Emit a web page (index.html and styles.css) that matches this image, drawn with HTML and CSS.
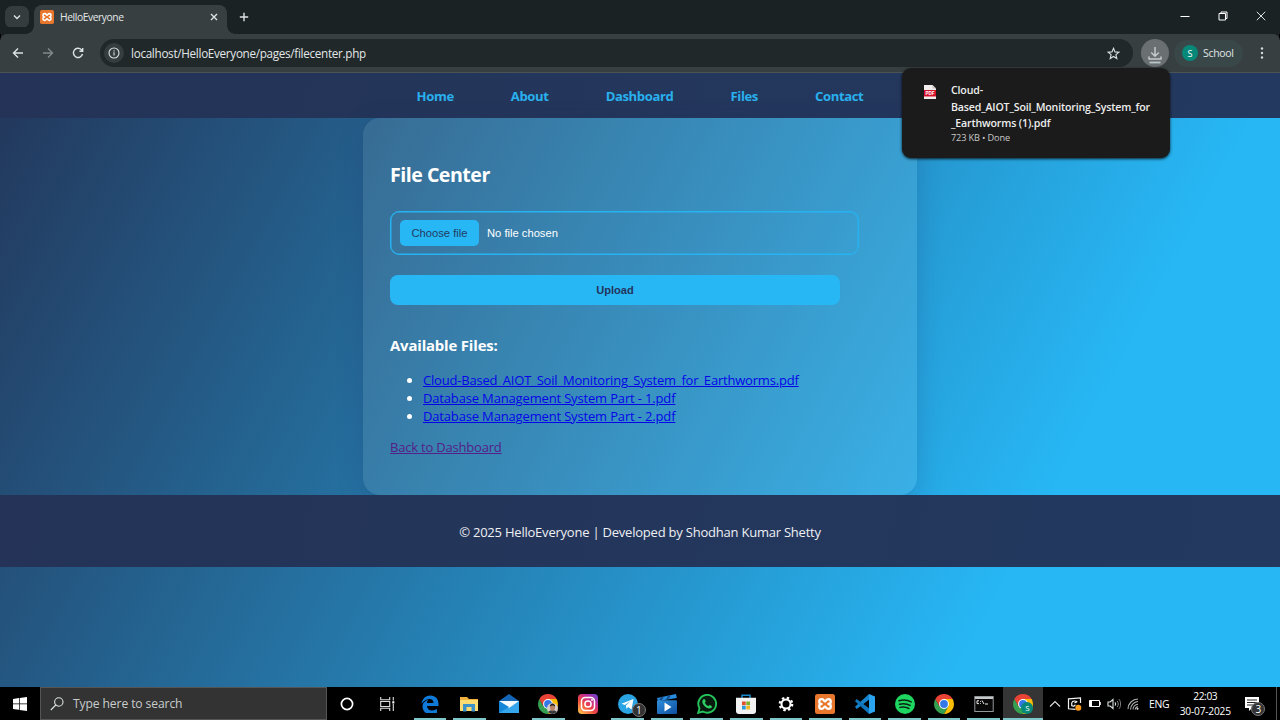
FILE: index.html
```html
<!DOCTYPE html>
<html lang="en">
<head>
<meta charset="utf-8">
<title>HelloEveryone</title>
<link rel="stylesheet" href="styles.css">
</head>
<body>
<svg class="defs" width="0" height="0" aria-hidden="true">
  <defs>
    <linearGradient id="ig" x1="0.1" y1="1" x2="0.9" y2="0"><stop offset="0" stop-color="#ffc44d"/><stop offset=".4" stop-color="#f0483e"/><stop offset=".7" stop-color="#c42d92"/><stop offset="1" stop-color="#6a45d0"/></linearGradient>
    <linearGradient id="tv" x1="0" y1="0" x2="1" y2="1"><stop offset="0" stop-color="#2f8fdc"/><stop offset="1" stop-color="#0d4f9e"/></linearGradient>
    <symbol id="xampp" viewBox="0 0 20 20">
      <rect width="20" height="20" rx="2.5" fill="#e8762c"/>
      <path d="M7 5.200H6.600A2.400 2.400 0 0 0 6.600 10a2.400 2.400 0 0 0 0 4.800C9 14.800 9 12.600 10 12.600s1 2.200 3.400 2.200a2.400 2.400 0 0 0 0-4.800 2.400 2.400 0 0 0 0-4.800C11 5.200 11 7.400 10 7.400S9 5.200 7 5.200z" fill="none" stroke="#fff" stroke-width="2.300" stroke-linejoin="round"/>
    </symbol>
    <symbol id="chrome" viewBox="0 0 20 20">
      <path d="M10 20 14.330 12.500 10 10 5.670 12.500 1.340 5A10 10 0 0 0 10 20z" fill="#34a050"/>
      <path d="M14.330 12.500 10 20A10 10 0 0 0 18.660 5H10z" fill="#fbbc05"/>
      <path d="M1.340 5A10 10 0 0 1 18.660 5H10L5.670 12.500z" fill="#e94335"/>
      <circle cx="10" cy="10" r="4.900" fill="#fff"/><circle cx="10" cy="10" r="3.900" fill="#3478e8"/>
    </symbol>
  </defs>
</svg>

<header class="tabstrip">
  <div class="tab-search"><svg width="8" height="8" viewBox="0 0 8 8"><path d="M1 2.500 4 5.500 7 2.500" class="line"/></svg></div>
  <div class="tab">
    <svg width="14" height="14"><use href="#xampp"/></svg>
    <span class="tab-title">HelloEveryone</span>
    <svg width="8" height="8" viewBox="0 0 8 8"><path d="M1 1 7 7M7 1 1 7" class="line"/></svg>
  </div>
  <svg class="new-tab" width="10" height="10" viewBox="0 0 10 10"><path d="M5 .8v8.400M.8 5h8.400" class="line"/></svg>
  <div class="window-controls">
    <svg width="10" height="10" viewBox="0 0 10 10"><path d="M.5 5.500h9" stroke="#fff"/></svg>
    <svg width="10" height="10" viewBox="0 0 10 10"><path d="M1 2.500h6.500V9H1zM3 2.500V1h6v6.500H7.500" fill="none" stroke="#fff"/></svg>
    <svg width="10" height="10" viewBox="0 0 10 10"><path d="m.8.8 8.400 8.400M9.200.8.8 9.200" stroke="#dfe3e3"/></svg>
  </div>
</header>

<div class="toolbar">
  <div class="history">
    <svg width="12" height="12" viewBox="0 0 12 12"><path d="M11 6H1.500M6 1.500 1.500 6 6 10.500" class="line"/></svg>
    <svg class="dim" width="12" height="12" viewBox="0 0 12 12"><path d="M1 6h9.500M6 1.500 10.500 6 6 10.500" class="line"/></svg>
    <svg width="12" height="12" viewBox="0 0 12 12"><path d="M10.500 7A4.600 4.600 0 1 1 9.400 2.700L10.600 4M10.700 1v3.300H7.400" class="line"/></svg>
  </div>
  <div class="omnibox">
    <span class="info"><svg width="12" height="12" viewBox="0 0 12 12"><circle cx="6" cy="6" r="5" class="thin"/><path d="M6 5.300v3.300M6 3.200v1.200" class="thin"/></svg></span>
    <span class="url">localhost/HelloEveryone/pages/filecenter.php</span>
    <svg class="star" width="13" height="13" viewBox="0 0 13 13"><path d="m6.500 1.300 1.500 3.600 3.900.3-3 2.500.9 3.800-3.300-2-3.300 2 .9-3.800-3-2.500 3.900-.3z" class="thin"/></svg>
  </div>
  <div class="download"><svg width="16" height="20" viewBox="0 0 16 20"><path d="M8 2v9M4.200 7.500 8 11.200l3.800-3.700M2 11.500V14h12v-2.500" fill="none" stroke="#c3c9ca" stroke-width="1.500"/><path d="M2.500 17.500h11" stroke="#b9c5c8" stroke-width="1.800"/></svg></div>
  <div class="profile"><span class="avatar">S</span><span class="profile-name">School</span></div>
  <svg class="menu-dots" width="4" height="12" viewBox="0 0 4 12"><g fill="#d5dadb"><circle cx="2" cy="1.500" r="1.200"/><circle cx="2" cy="6" r="1.200"/><circle cx="2" cy="10.500" r="1.200"/></g></svg>
</div>

<main class="page">
  <nav class="nav"><a>Home</a><a>About</a><a>Dashboard</a><a>Files</a><a>Contact</a></nav>
  <section class="card">
    <h2>File Center</h2>
    <div class="file-input"><span class="choose">Choose file</span><span class="chosen">No file chosen</span></div>
    <div class="upload">Upload</div>
    <h3>Available Files:</h3>
    <ul>
      <li><a class="link link-long">Cloud-Based_AIOT_Soil_Monitoring_System_for_Earthworms.pdf</a></li>
      <li><a class="link">Database Management System Part - 1.pdf</a></li>
      <li><a class="link">Database Management System Part - 2.pdf</a></li>
    </ul>
    <a class="back">Back to Dashboard</a>
  </section>
  <footer class="footer"><span>© 2025 HelloEveryone | Developed by Shodhan Kumar Shetty</span></footer>
</main>

<aside class="bubble">
  <svg width="12" height="16" viewBox="0 0 12 16"><path d="M0 1h8.500L12 4.500V15H0z" fill="#f3eeee"/><path d="M8.500 1v3.500H12z" fill="#c9c4c4"/><path d="M0 6h12v6.500H0z" fill="#d4102c"/><text x="6" y="10.900" class="pdf-label">PDF</text></svg>
  <div>
    <div class="bubble-name">Cloud-<br>Based_AIOT_Soil_Monitoring_System_for<br>_Earthworms (1).pdf</div>
    <div class="bubble-meta">723 KB • Done</div>
  </div>
</aside>

<div class="taskbar">
  <div class="start"><svg width="14" height="14" viewBox="0 0 14 14"><path d="M0 2 6 1.100V6.600H0zM6.700 1 14 0v6.600H6.700zM0 7.300h6v5.500L0 12zM6.700 7.300H14V14l-7.300-1z" fill="#fff"/></svg></div>
  <div class="search"><svg width="14" height="14" viewBox="0 0 14 14"><circle cx="8.800" cy="5" r="4.200" class="thin"/><path d="M5.800 8 .8 13" class="thin"/></svg><span>Type here to search</span></div>
  <div class="sys"><svg width="14" height="14" viewBox="0 0 14 14"><circle cx="7" cy="7" r="5.600" fill="none" stroke="#fff" stroke-width="1.700"/></svg></div>
  <div class="sys"><svg width="15" height="14" viewBox="0 0 15 14"><path d="M.7 0v2.700h9V0M.7 14v-2.700h9V14M.7 4.500h9v5h-9zM13.300 0v3.500M13.300 7v7" fill="none" stroke="#ddd" stroke-width="1.100"/><path d="M12.300 4.200h2v2.300h-2z" fill="#fff"/></svg></div>
  <div class="apps">
    <div class="app open"><svg width="18" height="18" viewBox="1 1 18 17"><path d="M1.500 9.200C2.300 3.800 6 1 10.300 1c5.500 0 8.200 4 8.200 8.500v1.900H7c.2 5 6.300 5.500 10 3.200v3.700c-5.800 3.200-14.500 1.600-14.500-6.500C2.500 8.600 5 6.300 8.500 5c-1 .9-1.500 2-1.600 3.400h6.700C13.600 2.700 5.500 3.400 1.500 9.200z" fill="#0f7ad8"/></svg></div>
    <div class="app open"><svg width="20" height="20" viewBox="0 0 20 20"><path d="M1 3h7l2 2h9v12H1z" fill="#f0b23d"/><path d="M1 6h18v11H1z" fill="#ffdc72"/><path d="M4 17.500V10h12v7.500h-3.500V13h-5v4.500z" fill="#3d93c9"/></svg></div>
    <div class="app"><svg width="20" height="20" viewBox="0 0 20 20"><path d="M0 7 10 0l10 7v12H0z" fill="#1565b5"/><path d="M0 7h20v12H0z" fill="#35a5ec"/><path d="M0 7h20L10 14z" fill="#f4fbff"/><path d="M0 7v12l10-6z" fill="#1486d8"/></svg></div>
    <div class="app open"><svg width="20" height="20" viewBox="0 0 20 20"><use href="#chrome" width="20" height="20"/><circle cx="14.500" cy="14.500" r="5.500" fill="#d9cfca"/><path d="M10.200 18c.8-2.500 7.800-2.500 8.600 0-2 2.600-6.600 2.600-8.600 0z" fill="#383b40"/><ellipse cx="14.500" cy="13.500" rx="2.500" ry="3.300" fill="#b8836a"/><path d="M11.800 13c-.3-4.800 5.700-4.800 5.400 0-.8-2-4.500-2-5.400 0z" fill="#252020"/></svg></div>
    <div class="app"><svg width="20" height="20" viewBox="0 0 20 20"><rect width="20" height="20" rx="4" fill="url(#ig)"/><rect x="3.500" y="3.500" width="13" height="13" rx="3.800" fill="none" stroke="#fff" stroke-width="1.500"/><circle cx="10" cy="10" r="3.100" fill="none" stroke="#fff" stroke-width="1.500"/><circle cx="14" cy="6" r=".9" fill="#fff"/></svg></div>
    <div class="app open"><svg width="20" height="20" viewBox="0 0 20 20"><circle cx="10" cy="10" r="10" fill="#2ba4e3"/><path d="m3.500 9.800 12-4.900-2 10.500-3.300-2.500-1.800 1.900-.5-3.400 4.900-4.400-6 3.900z" fill="#fff"/></svg><span class="badge">1</span></div>
    <div class="app open"><svg width="20" height="20" viewBox="0 0 20 20"><path d="M0 4 19 0l.8 4L1 7z" fill="#278ce0"/><path d="m4 3.200 3-.7-2 3.400H2zM11 1.700l3-.7-2 3.800-3 .4z" fill="#15508c"/><rect y="6.200" width="20" height="13.800" rx="1" fill="url(#tv)"/><path d="M7.500 8.500v9l7-4.500z" fill="#fff"/></svg></div>
    <div class="app open"><svg width="20" height="20" viewBox="0 0 20 20"><path d="m1.200 18.800 1.300-4.600a8.900 8.900 0 1 1 3.300 3.300z" fill="#08190d" stroke="#25c25a" stroke-width="1.900"/><path d="M6.200 5.400c.6-.6 1.500-.6 1.800.2l.7 1.700c.2.700-.9 1.300-.7 1.700.7 1.500 1.700 2.400 3.200 3 .5.200 1-1.200 1.600-1l1.800.9c.7.300.2 1.700-.5 2.200-1.800 1.200-5.200-.1-7.100-2.500C5.200 9.300 4.600 6.800 6.200 5.400z" fill="#2fce63"/></svg></div>
    <div class="app open"><svg width="20" height="20" viewBox="0 0 20 20"><path d="M6 6V1.200h8V6" fill="none" stroke="#1887cc" stroke-width="1.500"/><path d="M0 3.800h20V17a3 3 0 0 1-3 3H3a3 3 0 0 1-3-3z" fill="#f2f2f2"/><path d="M6 7.500h3.700v3.700H6z" fill="#e34e2b"/><path d="M10.300 7.500H14v3.700h-3.700z" fill="#7fb02c"/><path d="M6 11.800h3.700v3.700H6z" fill="#2a9bd8"/><path d="M10.300 11.800H14v3.700h-3.700z" fill="#f5b824"/></svg></div>
    <div class="app open"><svg width="20" height="20" viewBox="0 0 20 20"><circle cx="10" cy="10" r="4.500" fill="none" stroke="#fff" stroke-width="2"/><circle cx="10" cy="10" r="6.200" fill="none" stroke="#fff" stroke-width="2.300" stroke-dasharray="2.430 2.440"/></svg></div>
    <div class="app open"><svg width="20" height="20"><use href="#xampp"/></svg></div>
    <div class="app open"><svg width="20" height="20" viewBox="0 0 20 20"><path d="M14 0 0 12.700 1.700 15 15 5z" fill="#1683cc"/><path d="M14 20 0 7.300 1.700 5 15 15z" fill="#1075ba"/><path d="m14 0 6 2.500v15L14 20z" fill="#2ba4ef"/></svg></div>
    <div class="app open"><svg width="20" height="20" viewBox="0 0 20 20"><circle cx="10" cy="10" r="10" fill="#1ed760"/><path d="M4 6.800c4-1.300 8.700-.9 12.200 1.100M4.500 10.200c3.600-1 7.400-.6 10.600 1.200M5 13.400c3-.8 6.100-.5 8.900 1.100" fill="none" stroke="#0a2411" stroke-width="1.500" stroke-linecap="round"/></svg></div>
    <div class="app open"><svg width="20" height="20"><use href="#chrome"/></svg></div>
    <div class="app open"><svg width="20" height="20" viewBox="0 0 20 20"><rect x=".8" y="2.500" width="18.400" height="15" fill="#080808" stroke="#929799"/><path d="M1 4h18" stroke="#c4c8c9" stroke-width="2"/><path d="M5 6.800H3v2.800h2M6.500 7v.8m0 1.200v.7M8 6.500l2 3.500M11 10h3" fill="none" stroke="#eee"/></svg></div>
    <div class="app open active"><svg width="20" height="20"><use href="#chrome"/></svg><span class="s-badge">S</span></div>
  </div>
  <div class="tray">
    <svg width="12" height="8" viewBox="0 0 12 8"><path d="m1 6.500 5-5 5 5" class="thin"/></svg>
    <svg width="15" height="14" viewBox="0 0 15 14"><path d="M13.500 6V1L1.500 1.800v10l7 .5M1 12h2" fill="none" stroke="#f2f2f2" stroke-width="1.200"/><path d="M10 4.500C5.500 3 4.200 5 4.800 8.800c1.300.7 3 .4 3.400-1.200M7.500 6l2.800-1.500" fill="none" stroke="#fff" stroke-width="1.200"/><circle cx="11.300" cy="10.800" r="3" fill="#fa9b1d"/></svg>
    <svg width="13" height="9" viewBox="0 0 13 9"><path d="M1.500 1.500h10v6h-10zM12.300 3v3" fill="none" stroke="#fff"/><path d="M1.500 1.500H4v6H1.500z" fill="#fff"/></svg>
    <svg width="14" height="12" viewBox="0 0 14 12"><path d="M1 4h2.200L6 1.500v9L3.200 8H1z" class="thin"/><path d="M8 4.300c.8 1 .8 2.400 0 3.400" class="thin"/><path d="M10 2.800c1.700 1.900 1.700 4.500 0 6.400M12 1.200c2.200 2.900 2.200 6.700 0 9.600" fill="none" stroke="#888"/></svg>
    <svg width="12" height="12" viewBox="0 0 12 12"><g fill="none" stroke="#aeb1b2" stroke-width="1.100"><path d="M1 11C1 5.500 5.500 1.200 11 1M3.500 11.500c0-4.200 3.300-7.600 7.500-8M6 11.500c0-2.800 2.200-5 5-5.300M8.300 11.500c0-1.500 1.200-2.700 2.700-2.800"/></g><circle cx="10.500" cy="10.700" r="1" fill="#ddd"/></svg>
    <span class="lang">ENG</span>
    <div class="clock"><span>22:03</span><span class="date">30-07-2025</span></div>
    <div class="notice"><svg width="14" height="14" viewBox="0 0 14 14"><path d="M0 0h14v11H7l-3 3v-3H0z" fill="#fff"/><path d="M2 3h10M2 5.500h10M2 8h6" stroke="#222"/></svg><span class="badge">3</span></div>
  </div>
</div>
</body>
</html>
```
FILE: styles.css
```css
* { box-sizing: border-box; }
body { margin: 0; width: 1280px; height: 720px; overflow: hidden; display: flex; flex-direction: column; position: relative; font-family: "Open Sans", sans-serif; font-size: 13px; color: #fff; white-space: nowrap; background: #000; }
svg { display: block; flex: none; }
.defs { position: absolute; }
.line { fill: none; stroke: #dde2e3; stroke-width: 1.4; }
.thin { fill: none; stroke: #dde2e3; stroke-width: 1.1; }

.tabstrip { height: 34px; flex: none; display: flex; align-items: flex-start; background: #1b2224; padding: 5px 14px 0 5px; }
.tab-search { width: 24px; height: 22px; margin-top: 1px; border-radius: 7px; background: #353c3e; display: grid; place-items: center; }
.tab { position: relative; width: 193px; height: 29px; margin-left: 5px; background: #373f41; border-radius: 8px 8px 0 0; display: flex; align-items: center; padding: 0 9px 5px 6px; font-size: 10.3px; color: #e3e7e8; }
.tab::before, .tab::after { content: ""; position: absolute; bottom: 0; width: 8px; height: 8px; }
.tab::before { left: -8px; background: radial-gradient(circle at 0 0, transparent 7.5px, #373f41 8px); }
.tab::after { right: -8px; background: radial-gradient(circle at 100% 0, transparent 7.5px, #373f41 8px); }
.tab-title { flex: 1; margin-left: 6px; letter-spacing: -.42px; }
.new-tab { margin: 7px 0 0 12px; }
.window-controls { margin: 6px 0 0 auto; display: flex; gap: 28px; }

.toolbar { height: 39px; flex: none; display: flex; align-items: center; background: #373f41; border-bottom: 1px solid #4c5355; border-radius: 7px 7px 0 0; box-shadow: 0 -8px 0 -1px #1b2224; padding: 0 16px 0 12px; }
.history { display: flex; gap: 18px; width: 88px; }
.dim { opacity: .45; }
.omnibox { width: 1033px; height: 28px; border-radius: 14px; background: #20282a; display: flex; align-items: center; padding: 0 13px 0 4px; }
.info { width: 20px; height: 20px; border-radius: 50%; background: #353d3f; display: grid; place-items: center; }
.url { flex: 1; margin-left: 7px; font-size: 11.7px; letter-spacing: -.3px; color: #e2e6e7; }
.download { width: 28px; height: 28px; margin-left: 8px; border-radius: 50%; background: #6a7072; display: grid; place-items: center; padding-top: 3px; }
.profile { width: 69px; height: 27px; margin-left: 5px; border-radius: 14px; background: #394749; display: flex; align-items: center; padding-left: 8px; }
.avatar { width: 16px; height: 16px; border-radius: 50%; background: #078879; display: grid; place-items: center; font-size: 9px; }
.profile-name { margin-left: 5px; font-size: 10.5px; letter-spacing: -.3px; color: #e0e4e5; }
.menu-dots { margin-left: auto; }

.page { height: 614px; flex: none; background: linear-gradient(118deg, #23365a 0%, #27b7f5 79.5%); }
.nav { height: 45px; background: linear-gradient(100deg, #243357, #23395f); display: flex; justify-content: center; align-items: center; gap: 57px; padding-top: 1px; font-weight: 700; font-size: 13.1px; letter-spacing: -.38px; color: #29b0ee; }
.card { width: 554px; height: 377px; margin: 0 auto; padding: 0 27px; border-radius: 17px; background: rgba(255,255,255,.09); box-shadow: 0 7px 27px rgba(31,38,105,.2); display: flex; flex-direction: column; align-items: flex-start; }
h2 { margin: 43px 0 0; font-size: 19.6px; line-height: 28px; letter-spacing: -.5px; }
.file-input { width: 469px; height: 44px; margin-top: 22px; border: 1px solid #27b3f1; box-shadow: inset 0 0 0 .5px #27b3f1; border-radius: 9px; display: flex; align-items: center; padding: 0 9px 0 9px; font-family: "Liberation Sans", sans-serif; font-size: 11.2px; }
.choose { width: 79px; height: 26px; border-radius: 5px; background: #27b7f5; color: #233a62; display: grid; place-items: center; }
.chosen { margin-left: 8px; }
.upload { width: 450px; height: 30px; margin-top: 20px; border-radius: 8px; background: #27b7f5; color: #24345c; display: grid; place-items: center; font: bold 11.1px "Liberation Sans", sans-serif; }
h3 { margin: 30px 0 0; font-size: 14.9px; line-height: 21px; letter-spacing: -.16px; }
ul { margin: 15px 0 0; padding-left: 33px; line-height: 18px; }
.link { color: #0505e8; text-decoration: underline; letter-spacing: -.16px; }
.link-long { letter-spacing: -.195px; }
.back { margin-top: 13px; line-height: 18px; color: #552088; text-decoration: underline; letter-spacing: -.2px; }
.footer { height: 72px; background: linear-gradient(100deg, #243357, #23395f); display: grid; place-items: center; color: #eef0f4; letter-spacing: -.22px; padding-top: 2px; }

.bubble { position: absolute; left: 902px; top: 68px; width: 268px; height: 90px; border-radius: 9px; background: #1b1b1b; box-shadow: 0 1px 3px rgba(0,0,0,.8); display: flex; gap: 15px; padding: 14px 0 0 22px; color: #eee; }
.bubble > svg { margin-top: 2px; }
.bubble-name { font-weight: 600; font-size: 10.6px; line-height: 16.7px; letter-spacing: -.16px; }
.bubble-meta { font-size: 9.2px; line-height: 12px; color: #c8c8c8; letter-spacing: -.15px; }
.pdf-label { font: bold 4.6px "Liberation Sans", sans-serif; fill: #fff; text-anchor: middle; }

.taskbar { height: 33px; flex: none; background: #000; display: flex; align-items: stretch; }
.start { width: 40px; display: grid; place-items: center; }
.search { width: 287px; background: #333; border: 1px solid #555; display: flex; align-items: center; gap: 9px; padding-left: 9px; font-size: 12.1px; letter-spacing: -.1px; color: #c9cccd; }
.sys { width: 40px; display: grid; place-items: center; }
.apps { display: flex; width: 633px; margin-left: 3px; }
.app { flex: 1; display: grid; place-items: center; position: relative; }
.open::after { content: ""; position: absolute; left: 3.5px; right: 3.5px; bottom: 0; height: 2px; background: #7ec8cc; }
.active { background: #353535; }
.active::after { left: 0; right: 0; }
.badge { position: absolute; width: 14px; height: 14px; border-radius: 50%; background: #333; border: 1px solid #777; font-size: 10px; line-height: 12px; text-align: center; }
.app .badge { left: 24px; top: 16px; }
.s-badge { position: absolute; left: 18px; top: 15px; width: 12px; height: 12px; border-radius: 50%; background: #078879; font-size: 8px; line-height: 12px; text-align: center; }
.tray { flex: 1; display: flex; align-items: center; padding-left: 6px; gap: 6px; border-right: 1px solid #555; margin-right: 3px; }
.lang { font-size: 10.4px; margin-left: 4px; letter-spacing: -.3px; }
.clock { width: 54px; margin-left: 3px; display: flex; flex-direction: column; align-items: center; font-size: 10.2px; line-height: 15px; letter-spacing: -.4px; }
.date { letter-spacing: -.2px; }
.notice { position: relative; margin-left: 7px; }
.notice .badge { left: 6px; top: 5px; }
```
